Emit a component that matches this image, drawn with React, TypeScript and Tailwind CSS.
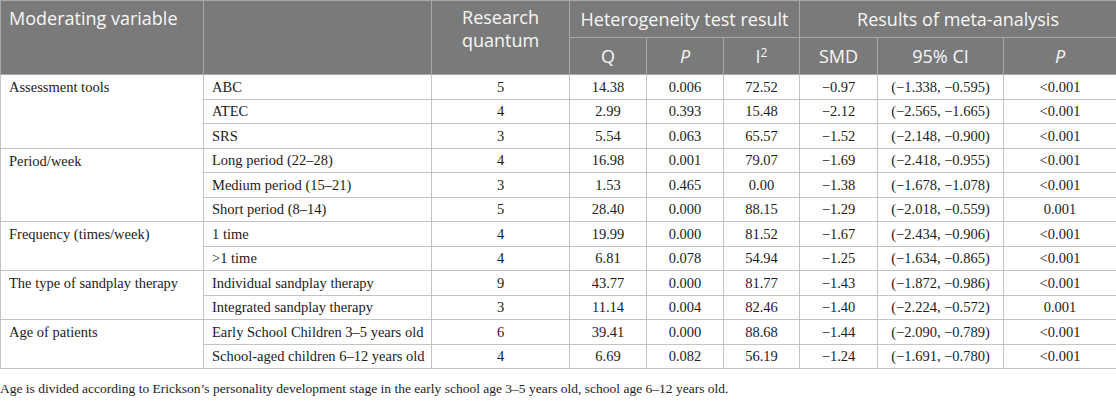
import React from 'react';

type Row = {
  group?: string;
  span?: number;
  sub: string;
  n: string;
  q: string;
  p: string;
  i2: string;
  smd: string;
  ci: string;
  p2: string;
};

const ROWS: Row[] = [
  { group: 'Assessment tools', span: 3, sub: 'ABC', n: '5', q: '14.38', p: '0.006', i2: '72.52', smd: '−0.97', ci: '(−1.338, −0.595)', p2: '<0.001' },
  { sub: 'ATEC', n: '4', q: '2.99', p: '0.393', i2: '15.48', smd: '−2.12', ci: '(−2.565, −1.665)', p2: '<0.001' },
  { sub: 'SRS', n: '3', q: '5.54', p: '0.063', i2: '65.57', smd: '−1.52', ci: '(−2.148, −0.900)', p2: '<0.001' },
  { group: 'Period/week', span: 3, sub: 'Long period (22–28)', n: '4', q: '16.98', p: '0.001', i2: '79.07', smd: '−1.69', ci: '(−2.418, −0.955)', p2: '<0.001' },
  { sub: 'Medium period (15–21)', n: '3', q: '1.53', p: '0.465', i2: '0.00', smd: '−1.38', ci: '(−1.678, −1.078)', p2: '<0.001' },
  { sub: 'Short period (8–14)', n: '5', q: '28.40', p: '0.000', i2: '88.15', smd: '−1.29', ci: '(−2.018, −0.559)', p2: '0.001' },
  { group: 'Frequency (times/week)', span: 2, sub: '1 time', n: '4', q: '19.99', p: '0.000', i2: '81.52', smd: '−1.67', ci: '(−2.434, −0.906)', p2: '<0.001' },
  { sub: '>1 time', n: '4', q: '6.81', p: '0.078', i2: '54.94', smd: '−1.25', ci: '(−1.634, −0.865)', p2: '<0.001' },
  { group: 'The type of sandplay therapy', span: 2, sub: 'Individual sandplay therapy', n: '9', q: '43.77', p: '0.000', i2: '81.77', smd: '−1.43', ci: '(−1.872, −0.986)', p2: '<0.001' },
  { sub: 'Integrated sandplay therapy', n: '3', q: '11.14', p: '0.004', i2: '82.46', smd: '−1.40', ci: '(−2.224, −0.572)', p2: '0.001' },
  { group: 'Age of patients', span: 2, sub: 'Early School Children 3–5 years old', n: '6', q: '39.41', p: '0.000', i2: '88.68', smd: '−1.44', ci: '(−2.090, −0.789)', p2: '<0.001' },
  { sub: 'School-aged children 6–12 years old', n: '4', q: '6.69', p: '0.082', i2: '56.19', smd: '−1.24', ci: '(−1.691, −0.780)', p2: '<0.001' },
];

const th = 'border border-[#a9a9a9] font-normal px-2';
const td = 'border border-[#c4c4c4] px-2 h-[24.5px] text-center whitespace-nowrap';

export default function App() {
  return (
    <div className="w-[1116px] h-[402px] bg-white text-[#1c1c1c] font-['Liberation_Serif',serif]">
      <table className="w-[1116px] table-fixed border-collapse text-[14.5px] leading-none">
        <colgroup>
          <col className="w-[203px]" />
          <col className="w-[228px]" />
          <col className="w-[138px]" />
          <col className="w-[77px]" />
          <col className="w-[77px]" />
          <col className="w-[76px]" />
          <col className="w-[78px]" />
          <col className="w-[126px]" />
          <col className="w-[113px]" />
        </colgroup>
        <thead className="bg-[#7a7a7a] text-[#f7f7f7] font-['Open_Sans',sans-serif] text-[18px] leading-[23px]">
          <tr className="h-[37px]">
            <th rowSpan={2} className={`${th} text-left align-top pt-[6px]`}>Moderating variable</th>
            <th rowSpan={2} className={th}></th>
            <th rowSpan={2} className={`${th} text-center align-top pt-[5px]`}>Research quantum</th>
            <th colSpan={3} className={`${th} text-center`}>Heterogeneity test result</th>
            <th colSpan={3} className={`${th} text-center`}>Results of meta-analysis</th>
          </tr>
          <tr className="h-[37px]">
            <th className={`${th} text-center`}>Q</th>
            <th className={`${th} text-center italic`}>P</th>
            <th className={`${th} text-center`}>
              I<sup className="text-[12px]">2</sup>
            </th>
            <th className={`${th} text-center`}>SMD</th>
            <th className={`${th} text-center`}>95% CI</th>
            <th className={`${th} text-center italic`}>P</th>
          </tr>
        </thead>
        <tbody>
          {ROWS.map((r) => (
            <tr key={r.sub}>
              {r.group && (
                <td rowSpan={r.span} className="border border-[#c4c4c4] px-2 align-top pt-[5px] text-left whitespace-nowrap">
                  {r.group}
                </td>
              )}
              <td className={`${td} !text-left`}>{r.sub}</td>
              <td className={td}>{r.n}</td>
              <td className={td}>{r.q}</td>
              <td className={td}>{r.p}</td>
              <td className={td}>{r.i2}</td>
              <td className={td}>{r.smd}</td>
              <td className={td}>{r.ci}</td>
              <td className={td}>{r.p2}</td>
            </tr>
          ))}
        </tbody>
      </table>
      <p className="mt-[13px] text-[13.5px] leading-none">
        Age is divided according to Erickson’s personality development stage in the early school age 3–5 years old, school age 6–12 years old.
      </p>
    </div>
  );
}
